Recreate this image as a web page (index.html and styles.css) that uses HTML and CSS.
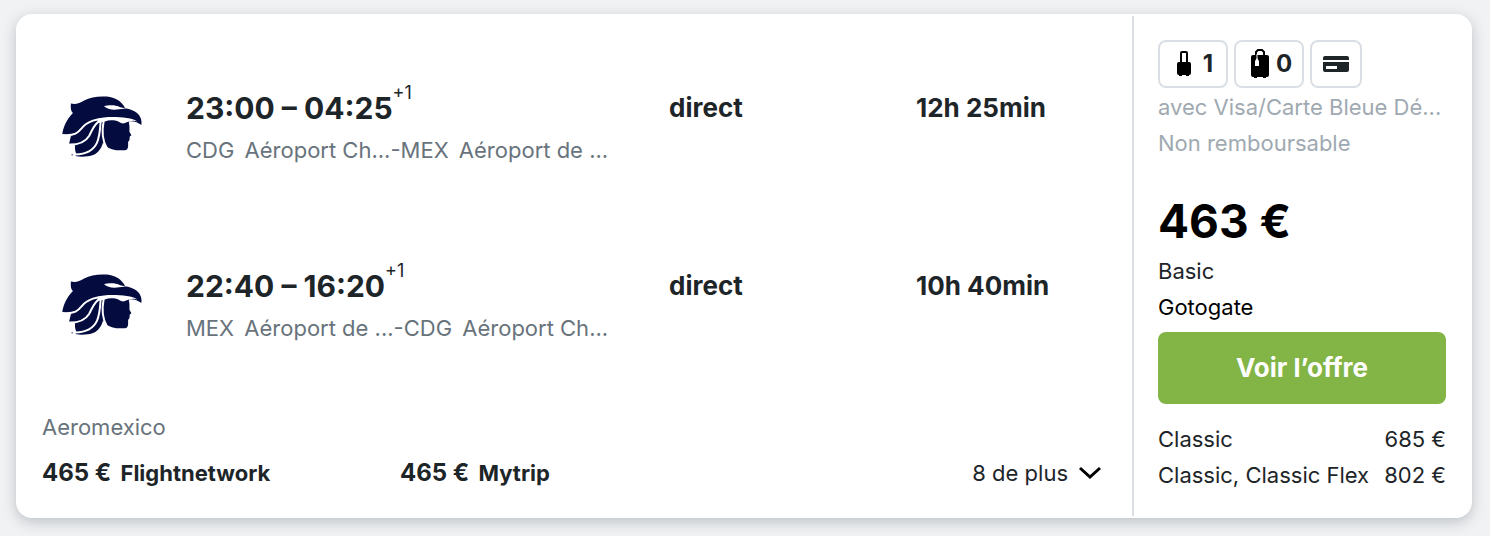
FILE: index.html
```html
<!DOCTYPE html>
<html lang="fr">
<head>
  <meta charset="UTF-8">
  <meta name="viewport" content="width=device-width, initial-scale=1.0">
  <title>Paris - Mexico</title>
  <link rel="stylesheet" href="styles.css">
</head>
<body>

  <svg class="symbols" width="0" height="0" aria-hidden="true">
    <symbol id="airline-logo" viewBox="36 32 242 186">
      <path fill="#030b3f" d="M63 54 C78 58 88 53 103 45 C122 34 147 31 172 33 C197 36 216 47 227 68 C249 71 268 82 273 96 C277 104 277 112 276 119 C265 111 253 106 238 108 L240 122 L240 139 L246 150 L241 154 L240 164 L236 170 L236 183 Q235 195 226 195 L200 195 C182 192 168 186 160 172 C155 190 146 203 132 209 C113 216 92 216 76 213 L80 208 C76 198 74 190 76 180 L57 177 C60 167 61 158 64 150 L37 147 C39 127 50 102 69 83 C62 77 62 65 63 54 Z"/>
      <path fill="#fff" d="M163 62 C177 58 199 58 212 65 L230 69 L195 73 C180 73 172 68 163 62 Z"/>
      <path fill="#fff" d="M142 100 C165 93 205 94 232 98 C246 100 256 103 264 108 C250 104 241 107 232 111 C223 116 216 115 208 109 C195 104 179 103 166 108 L148 112 Z"/>
      <g fill="none" stroke="#fff" stroke-width="6">
        <path d="M36 149 C92 154 88 130 109 116 C122 107 136 102 152 102"/>
        <path d="M56 178 C88 179 108 168 118 152 C128 134 132 117 151 106"/>
        <path d="M76 208 C114 207 132 194 142 172 C151 151 151 132 153 106"/>
        <path d="M162 107 C156 138 156 164 172 190"/>
      </g>
      <circle cx="67" cy="209" r="3" fill="#8b90ad"/>
    </symbol>
  </svg>

  <article class="card">
    <div class="trip">
      <section class="leg">
        <svg class="logo" role="img" aria-label="Aeromexico"><use href="#airline-logo"/></svg>
        <div>
          <div class="times">23:00 – 04:25<sup>+1</sup></div>
          <div class="airports"><span class="code">CDG</span> Aéroport Ch...-<span class="code">MEX</span> Aéroport de ...</div>
        </div>
        <div class="detail">direct</div>
        <div class="detail">12h 25min</div>
      </section>

      <section class="leg">
        <svg class="logo" role="img" aria-label="Aeromexico"><use href="#airline-logo"/></svg>
        <div>
          <div class="times">22:40 – 16:20<sup>+1</sup></div>
          <div class="airports"><span class="code">MEX</span> Aéroport de ...-<span class="code">CDG</span> Aéroport Ch...</div>
        </div>
        <div class="detail">direct</div>
        <div class="detail">10h 40min</div>
      </section>

      <div class="airline">Aeromexico</div>
      <div class="providers">
        <a href="#"><span class="amount">465 €</span> Flightnetwork</a>
        <a href="#"><span class="amount">465 €</span> Mytrip</a>
        <button type="button" class="more">
          8 de plus
          <svg width="24" height="14" viewBox="0 0 24 14" aria-hidden="true"><path d="M2 2 L12 11 L22 2" fill="none" stroke="#000" stroke-width="3"/></svg>
        </button>
      </div>
    </div>

    <aside class="offer">
      <div class="badges">
        <button type="button" class="badge" aria-label="1 bagage cabine">
          <svg width="28" height="30" viewBox="-7 -2 28 30" aria-hidden="true">
            <path d="M4 12 V2 Q4 1 5 1 H9 Q10 1 10 2 V12" fill="none" stroke="#000" stroke-width="2"/>
            <path d="M2 11 H12 Q14 11 14 13 V22 Q14 24 12 24 V25 H9 V24 H5 V25 H2 V24 Q0 24 0 22 V13 Q0 11 2 11 Z"/>
          </svg>
          <span class="count">1</span>
        </button>
        <button type="button" class="badge" aria-label="0 bagage en soute">
          <svg width="28" height="30" viewBox="-5 0 28 30" aria-hidden="true">
            <path d="M5 7 V3 L7 1 H11 L13 3 V7" fill="none" stroke="#000" stroke-width="2"/>
            <path d="M2 6 H16 Q18 6 18 8 V26 Q18 28 16 28 H15 V29 H12 V28 H6 V29 H3 V28 H2 Q0 28 0 26 V8 Q0 6 2 6 Z"/>
            <path d="M6 5 V10" stroke="#fff"/>
            <path d="M4 12 L6 9 L8 12 V17 H4 Z" fill="#fff"/>
          </svg>
          <span class="count">0</span>
        </button>
        <button type="button" class="badge" aria-label="Carte de paiement">
          <svg width="28" height="16" viewBox="-1 0 28 16" aria-hidden="true">
            <path fill="#1d2529" fill-rule="evenodd" d="M2 0 H24 Q26 0 26 2 V4 H0 V2 Q0 0 2 0 Z M0 6 H26 V14 Q26 16 24 16 H2 Q0 16 0 14 Z M3 10 V13 H14 V10 Z"/>
          </svg>
        </button>
      </div>
      <div class="note">avec Visa/Carte Bleue Dé...</div>
      <div class="note">Non remboursable</div>

      <div class="price">463 €</div>
      <div>Basic</div>
      <div class="seller">Gotogate</div>
      <a class="cta" href="#">Voir l’offre</a>

      <div class="fare"><span>Classic</span><span>685 €</span></div>
      <div class="fare"><span>Classic, Classic Flex</span><span>802 €</span></div>
    </aside>
  </article>

</body>
</html>
```
FILE: styles.css
```css
* {
  margin: 0;
  padding: 0;
  box-sizing: border-box;
}

body {
  padding: 14px 18px 18px 16px;
  background-color: #f1f2f4;
  color: #1d2529;
  font-family: Inter, "Liberation Sans", sans-serif;
  font-size: 22px;
  line-height: 36px;
}

a {
  color: inherit;
  text-decoration: none;
}

button {
  border: none;
  background: none;
  color: inherit;
  font: inherit;
  cursor: pointer;
}

.symbols {
  position: absolute;
}

.card {
  display: flex;
  padding: 2px 0;
  background-color: #fff;
  border-radius: 16px;
  box-shadow: 0 4px 14px rgba(37, 50, 60, 0.25);
}

/* Outbound and return flights */
.trip {
  flex: 1;
  padding: 72px 30px 25px 26px;
}

.leg {
  display: grid;
  grid-template-columns: 144px 483fr 247fr 186fr;
  margin-bottom: 98px;
}

.leg + .leg {
  margin-bottom: 63px;
}

.logo {
  width: 80px;
  height: 62px;
  margin: 8px 0 0 20px;
}

.times {
  font-size: 30px;
  font-weight: 700;
  line-height: 40px;
  white-space: nowrap;
}

.times sup {
  font-size: 18px;
  font-weight: 400;
  line-height: 0;
  vertical-align: 20px;
}

.airports {
  margin-top: 4px;
  color: #68737c;
  white-space: nowrap;
}

.code {
  margin-right: 4px;
}

.detail {
  font-size: 26px;
  font-weight: 700;
  line-height: 40px;
}

.airline {
  color: #68737c;
}

/* Other sellers */
.providers {
  display: grid;
  grid-template-columns: 358fr 358fr 344fr;
  margin-top: 10px;
  font-weight: 700;
}

.amount {
  margin-right: 4px;
  font-size: 24px;
}

.more {
  display: flex;
  align-items: center;
  justify-content: flex-end;
  gap: 10px;
  font-weight: 400;
}

/* Price column */
.offer {
  width: 340px;
  padding: 24px 26px 23px 24px;
  border-left: 2px solid #dadfe5;
}

.badges {
  display: flex;
  gap: 6px;
  margin-bottom: 1px;
}

.badge {
  display: flex;
  align-items: center;
  gap: 2px;
  height: 48px;
  padding: 0 10px;
  border: 2px solid #dadfe5;
  border-radius: 8px;
  font-size: 24px;
  font-weight: 700;
}

.count {
  width: 16px;
  text-align: center;
}

.note {
  color: #9fa9b1;
  white-space: nowrap;
}

.price {
  margin: 32px 0 4px;
  color: #000;
  font-size: 46px;
  font-weight: 700;
  line-height: 56px;
}

.seller {
  color: #000;
}

.cta {
  display: block;
  margin: 7px 0 17px;
  background-color: #82b446;
  border-radius: 8px;
  color: #fff;
  font-size: 26px;
  font-weight: 700;
  line-height: 72px;
  text-align: center;
}

.fare {
  display: flex;
  justify-content: space-between;
  white-space: nowrap;
}
```
